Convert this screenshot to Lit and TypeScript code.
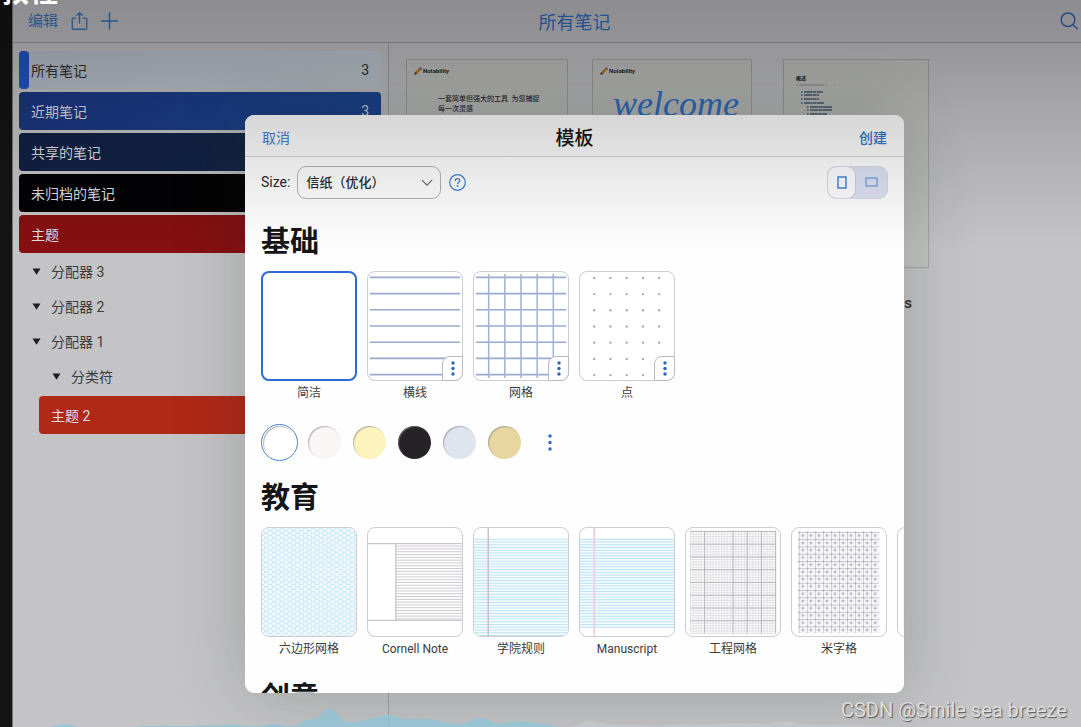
import { LitElement, html, css, svg, nothing } from "lit";
import { customElement, property, state } from "lit/decorators.js";
import { classMap } from "lit/directives/class-map.js";

const range = (n: number) => Array.from({ length: n }, (_, i) => i);

/* Paper artwork: every sheet is drawn on a 96 x 110 canvas. */
const hLines = (ys: number[], x1: number, x2: number, color: string, w = 1) =>
  ys.map((y) => svg`<line x1=${x1} x2=${x2} y1=${y} y2=${y} stroke=${color} stroke-width=${w}></line>`);
const vLines = (xs: number[], y1: number, y2: number, color: string, w = 1) =>
  xs.map((x) => svg`<line x1=${x} x2=${x} y1=${y1} y2=${y2} stroke=${color} stroke-width=${w}></line>`);

const ruleYs = range(7).map((i) => 5.5 + i * 16.5);

const papers: Record<string, () => unknown> = {
  plain: () => nothing,
  lines: () => hLines(ruleYs, 2, 94, "#9aaccb", 1.6),
  grid: () => [
    hLines(ruleYs, 2, 94, "#9aaccb", 1.6),
    vLines(range(5).map((i) => 15 + i * 16.5), 2, 108, "#a3b4d2", 1.6),
  ],
  dots: () =>
    ruleYs.map((y) => range(5).map((i) => svg`<circle cx=${14.5 + i * 16.6} cy=${y + 0.5} r="1.2" fill="#a6abbd"></circle>`)),
  hex: () => svg`
    <defs>
      <pattern id="hex" width="8" height="5" patternUnits="userSpaceOnUse">
        <path d="M0 2.5H1.5L3 0H5.5L7 2.5H8M1.5 2.5L3 5H5.5L7 2.5" fill="none" stroke="#b2e0f2" stroke-width="0.8"></path>
      </pattern>
    </defs>
    <rect width="96" height="110" fill="#f4fbff"></rect>
    <rect width="96" height="110" fill="url(#hex)"></rect>`,
  cornell: () => [
    hLines([16, 94], 0, 96, "#b9b6be"),
    vLines([28.5], 16, 94, "#b9b6be"),
    hLines(range(27).map((i) => 18.5 + i * 2.85), 28, 96, "#c5c1c9", 0.9),
  ],
  college: () => [
    svg`<rect y="11" width="96" height="99" fill="#f4fcff"></rect>`,
    hLines(range(36).map((i) => 11.5 + i * 2.8), 0, 96, "#b6e0ee", 0.9),
    vLines([14.5], 0, 110, "#c5aecb", 1.2),
  ],
  manuscript: () => [
    svg`<rect y="11" width="96" height="90" fill="#f4fcff"></rect>`,
    hLines(range(33).map((i) => 11.5 + i * 2.8), 0, 96, "#b2dff1", 0.9),
    vLines([14.5], 0, 110, "#f6cbe2", 1.8),
  ],
  engineer: () => [
    hLines(range(41).map((i) => 3.5 + i * 2.6), 4, 92, "#dad8dd", 0.8),
    vLines(range(31).map((i) => 4.5 + i * 2.9), 3, 107, "#dddbe0", 0.8),
    hLines(range(8).map((i) => 3.5 + i * 13), 4, 92, "#b4b2b8", 0.9),
    vLines([19, 48, 62.5, 77, 91.5], 3, 107, "#b4b2b8", 0.9),
  ],
  rice: () => svg`
    <defs>
      <pattern id="rice" x="7" y="4" width="8.2" height="7.4" patternUnits="userSpaceOnUse">
        <path d="M0 0H8.2M0 0V7.4" stroke="#b3b0ba" stroke-width="1.2"></path>
        <path d="M0 0L8.2 7.4M8.2 0L0 7.4M4.1 0V7.4M0 3.7H8.2" stroke="#cecbd4" stroke-width="0.5"></path>
        <circle cx="4.1" cy="3.7" r="1.1" fill="#aaa7b2"></circle>
        <circle cx="0" cy="0" r="1.4" fill="#a19ea9"></circle>
      </pattern>
    </defs>
    <rect x="6" y="3" width="83" height="104" fill="url(#rice)"></rect>`,
  staff: () => [
    hLines(range(26).map((i) => 6 + i * 3.9), 6, 90, "#c2bfc8", 1),
    vLines([6.5], 6, 104, "#c2bfc8"),
  ],
};

@customElement("paper-card")
class PaperCard extends LitElement {
  @property() kind = "plain";
  @property() label = "";
  @property({ type: Boolean }) selected = false;
  @property({ type: Boolean }) menu = false;

  static styles = css`
    :host { display: block; flex: none; width: 96px; }
    button { font: inherit; color: inherit; padding: 0; border: 0; background: none; display: block; }
    .wrap { position: relative; }
    .sheet {
      box-sizing: border-box; width: 96px; height: 110px; overflow: hidden;
      border: 1px solid #cdcbd4; border-radius: 8px; background: #fff;
    }
    .sheet svg { display: block; width: 100%; height: 100%; }
    .selected { border: 2px solid #2c6bd0; }
    .more {
      position: absolute; right: 0; bottom: 0; box-sizing: border-box; width: 21px; height: 25px;
      border: 1px solid #b9bac4; border-radius: 8px 0 8px 0; background: #fff;
      display: grid; place-items: center;
    }
    .label {
      display: block; text-align: center; white-space: nowrap;
      font-size: 12px; line-height: 24px; color: #3c3c40;
    }
  `;

  render() {
    return html`
      <div class="wrap">
        <button class=${classMap({ sheet: true, selected: this.selected })} aria-labelledby="label" aria-pressed=${this.selected}>
          <svg viewBox="0 0 96 110" preserveAspectRatio="none">${papers[this.kind]()}</svg>
        </button>
        ${this.menu
          ? html`<button class="more" aria-label="更多">
              <svg width="4" height="15" viewBox="0 0 4 15" fill="#2b66bd">
                <circle cx="2" cy="2" r="1.7"></circle><circle cx="2" cy="7.5" r="1.7"></circle><circle cx="2" cy="13" r="1.7"></circle>
              </svg>
            </button>`
          : nothing}
      </div>
      <span class="label" id="label">${this.label}</span>
    `;
  }
}

@customElement("template-dialog")
class TemplateDialog extends LitElement {
  @state() private landscape = false;
  @state() private paper = "plain";
  @state() private tint = 0;

  private basics = [
    { kind: "plain", label: "简洁", menu: false },
    { kind: "lines", label: "横线", menu: true },
    { kind: "grid", label: "网格", menu: true },
    { kind: "dots", label: "点", menu: true },
  ];
  private education = [
    { kind: "hex", label: "六边形网格" },
    { kind: "cornell", label: "Cornell Note" },
    { kind: "college", label: "学院规则" },
    { kind: "manuscript", label: "Manuscript" },
    { kind: "engineer", label: "工程网格" },
    { kind: "rice", label: "米字格" },
    { kind: "staff", label: "" },
  ];
  private tints = ["#ffffff", "#faf6f5", "#fcf3bd", "#252326", "#dee5ee", "#e7d6a0"];

  static styles = css`
    :host {
      display: flex; flex-direction: column; overflow: hidden; color: #151517;
      background: #fefefe; border-radius: 9px;
    }
    button { font: inherit; padding: 0; border: 0; background: none; }
    .bar {
      flex: none; display: grid; grid-template-columns: 1fr auto 1fr; align-items: center;
      height: 42px; padding: 5px 17px 0; box-sizing: border-box; border-bottom: 1px solid #d7d5dc;
      background: #fafafa;
    }
    .bar h2 { margin: 0; font-size: 19px; line-height: 32px; padding-top: 2px; font-weight: 500; }
    .link { color: #3a7fd6; font-size: 14px; line-height: 24px; }
    .strong { color: #2f74cc; font-weight: 500; justify-self: end; }
    .cancel { justify-self: start; }
    .tools { flex: none; display: flex; align-items: center; height: 50px; padding: 0 16px; }
    .tools label { font-size: 14px; margin-right: 7px; color: #2a2a2d; }
    .pick { position: relative; display: flex; margin-right: 8px; }
    select {
      appearance: none; box-sizing: border-box; width: 144px; height: 33px; padding: 0 30px 0 8px;
      font: inherit; font-size: 13px; font-weight: 500; color: #2a2a2d;
      border: 1px solid #b4b2b9; border-radius: 9px; background: transparent;
    }
    .chev { position: absolute; right: 8px; top: 13px; pointer-events: none; }
    .help { display: flex; }
    .seg {
      margin-left: auto; display: flex; box-sizing: border-box; width: 61px; height: 33px;
      border: 1px solid #d9d9e6; border-radius: 9px; background: #dde1f2; overflow: hidden;
    }
    .seg button { flex: 1; display: grid; place-items: center; border-radius: 8px; opacity: 0.6; }
    .seg .portrait { flex: 0 0 27px; }
    .seg .on { background: #fdfdff; opacity: 1; box-shadow: 0 0 0 1px #d3cfd6; }
    .body {
      flex: 1; min-height: 0; overflow: hidden; padding: 14px 0 0 16px;
      display: flex; flex-direction: column; gap: 16px;
    }
    section { flex: none; }
    h3 { margin: 0 0 8px; font-size: 29px; line-height: 42px; font-weight: 700; }
    .row { display: flex; gap: 10px; }
    .swatches { display: flex; align-items: center; gap: 8px; height: 37px; margin-top: 19px; }
    .slot { flex: none; width: 37px; height: 37px; border-radius: 50%; display: grid; place-items: center; box-sizing: border-box; }
    .slot.on { border: 1px solid #4a82d4; }
    .tint { width: 33px; height: 33px; border-radius: 50%; box-shadow: inset 1px 1px 1px #8a868c99; }
  `;

  private dots() {
    return html`<svg width="4" height="17" viewBox="0 0 4 17" fill="#2f68bd">
      <circle cx="2" cy="2" r="1.7"></circle><circle cx="2" cy="8.5" r="1.7"></circle><circle cx="2" cy="15" r="1.7"></circle>
    </svg>`;
  }

  render() {
    return html`
      <header class="bar">
        <button class="link cancel">取消</button>
        <h2>模板</h2>
        <button class="link strong">创建</button>
      </header>
      <div class="tools">
        <label for="size">Size:</label>
        <div class="pick">
          <select id="size"><option>信纸（优化）</option></select>
          <svg class="chev" width="12" height="8" viewBox="0 0 12 8" fill="none" stroke="#6a6a70" stroke-width="1.2">
            <path d="M1 1.2L6 6.2L11 1.2"></path>
          </svg>
        </div>
        <button class="help" aria-label="帮助">
          <svg width="17" height="17" viewBox="0 0 17 17" fill="none" stroke="#3d80d3" stroke-width="1.2">
            <circle cx="8.5" cy="8.5" r="7.8"></circle>
            <path d="M6.3 6.9C6.3 5.5 7.2 4.7 8.5 4.7S10.8 5.5 10.8 6.7C10.8 8.2 8.6 8.3 8.6 10"></path>
            <circle cx="8.6" cy="12" r="0.4"></circle>
          </svg>
        </button>
        <div class="seg">
          <button class=${classMap({ portrait: true, on: !this.landscape })} aria-label="纵向" @click=${() => (this.landscape = false)}>
            <svg width="10" height="13" viewBox="0 0 10 13" fill="none" stroke="#2f74cc" stroke-width="1.3">
              <rect x="1" y="1" width="8" height="11"></rect>
            </svg>
          </button>
          <button class=${classMap({ on: this.landscape })} aria-label="横向" @click=${() => (this.landscape = true)}>
            <svg width="13" height="10" viewBox="0 0 13 10" fill="none" stroke="#2f74cc" stroke-width="1.3">
              <rect x="1" y="1" width="11" height="8"></rect>
            </svg>
          </button>
        </div>
      </div>
      <div class="body">
        <section>
          <h3>基础</h3>
          <div class="row">
            ${this.basics.map((p) => html`<paper-card
              .kind=${p.kind} .label=${p.label} .menu=${p.menu} .selected=${this.paper === p.kind}
              @click=${() => (this.paper = p.kind)}></paper-card>`)}
          </div>
          <div class="swatches">
            ${this.tints.map((c, i) => html`<button class=${classMap({ slot: true, on: this.tint === i })}
              aria-label="纸张颜色" @click=${() => (this.tint = i)}>
              <span class="tint" style="background:${c}"></span>
            </button>`)}
            <button class="slot" aria-label="更多颜色">${this.dots()}</button>
          </div>
        </section>
        <section>
          <h3>教育</h3>
          <div class="row">
            ${this.education.map((p) => html`<paper-card
              .kind=${p.kind} .label=${p.label} .selected=${this.paper === p.kind}
              @click=${() => (this.paper = p.kind)}></paper-card>`)}
          </div>
        </section>
        <section><h3>创意</h3></section>
      </div>
    `;
  }
}

@customElement("app-root")
class AppRoot extends LitElement {
  private folders = [
    { name: "所有笔记", count: "3", cls: "all" },
    { name: "近期笔记", count: "3", cls: "recent" },
    { name: "共享的笔记", count: "", cls: "shared" },
    { name: "未归档的笔记", count: "", cls: "loose" },
    { name: "主题", count: "", cls: "subject" },
  ];
  private dividers = [
    { name: "分配器 3", nested: false },
    { name: "分配器 2", nested: false },
    { name: "分配器 1", nested: false },
    { name: "分类符", nested: true },
  ];

  static styles = css`
    :host {
      display: block; position: relative; height: 100vh; overflow: hidden; background: #141412;
      font-family: Roboto, "Noto Sans CJK SC", sans-serif; color: #2b2c30;
    }
    button { font: inherit; padding: 0; border: 0; background: none; text-align: left; }
    .app {
      position: relative; box-sizing: border-box; height: 100%; margin: 0 -56px 0 12px;
      display: flex; flex-direction: column; background: #c4c4c6; border-left: 1px solid #777;
    }
    .top {
      flex: none; box-sizing: border-box; height: 43px; padding: 0 58px 0 15px; border-bottom: 1px solid #9b9b9f;
      display: grid; grid-template-columns: 1fr auto 1fr; align-items: center; background: #c1c1c6;
    }
    .top h1 { margin: 0 0 0 42px; padding-top: 3px; font-size: 18px; line-height: 28px; font-weight: 400; color: #2f6cc0; }
    .acts { display: flex; align-items: center; gap: 13px; font-size: 15px; line-height: 20px; color: #3a70ba; }
    .acts button { color: inherit; display: flex; }
    .find { justify-self: end; display: flex; }
    .cols { flex: 1; min-height: 0; display: flex; }
    .side {
      flex: none; box-sizing: border-box; width: 376px; padding: 8px 7px 0 6px; border-right: 1px solid #a2a2a6;
      display: flex; flex-direction: column; gap: 3px; font-size: 14px;
    }
    .folder {
      box-sizing: border-box; flex: none; height: 38px; padding: 0 12px; border-radius: 4px; color: #dcdde2;
      display: flex; align-items: center; justify-content: space-between;
    }
    .all { background: linear-gradient(90deg, #b8bfca, #c1cad3); color: #2f3136; padding-left: 0; }
    .all::before { content: ""; flex: none; width: 10px; height: 38px; margin-right: 2px; border-radius: 4px; background: #2257c4; }
    .all span:first-of-type { flex: 1; }
    .recent { background: linear-gradient(90deg, #1c3680, #1b4796); }
    .shared { background: linear-gradient(90deg, #102142, #14284a); }
    .loose { background: #030204; }
    .subject { background: #860f11; }
    .sub { background: #b02818; margin: -1px 0 0 20px; }
    .tree { margin: -2px 0 0; padding: 0; list-style: none; }
    .tree button { display: flex; align-items: center; gap: 10px; height: 35px; padding-left: 13px; color: #3a3b3e; line-height: 20px; }
    .tree .nested { padding-left: 33px; }
    .notes { display: flex; align-items: flex-start; padding: 16px 0 0 17px; gap: 24px; }
    .note { flex: none; }
    .page { box-sizing: border-box; height: 209px; border: 1px solid #a5a5a6; background: #c3c4c2; overflow: hidden; }
    .w1 { width: 162px; }
    .w2 { width: 160px; }
    .w3 { width: 146px; margin-left: 7px; }
    .brand { display: flex; align-items: center; gap: 1px; padding: 7px 0 0 7px; font-size: 6px; line-height: 8px; font-weight: 700; color: #222; }
    .lead { margin: 19px 0 0 31px; font-size: 7px; line-height: 10px; font-weight: 500; }
    .script { margin: 9px 0 0 20px; font: italic 36px/40px "Liberation Serif", serif; color: #2f72cc; }
    .outline { padding: 14px 0 0 12px; font-size: 5px; line-height: 8px; font-weight: 700; color: #1c1c1e; }
    .outline svg { display: block; }
    .caption { text-align: right; padding: 25px 17px 0 0; font-size: 15px; line-height: 20px; font-weight: 500; }
    .modal {
      position: absolute; inset: 115px 233px 34px 232px; border-radius: 9px;
      box-shadow: 0 0 70px rgba(30, 42, 30, 0.24);
    }
    .shade {
      position: absolute; inset: 0 0 auto 0; height: 250px; pointer-events: none;
      background: linear-gradient(rgba(0,0,0,.27), rgba(0,0,0,.24) 16%, rgba(0,0,0,.14) 46%, rgba(0,0,0,.08) 70%, rgba(0,0,0,0));
    }
    .wave { position: absolute; left: 0; bottom: 0; width: 100%; height: 20px; }
    .clip {
      position: absolute; left: 0; top: -24px; font-size: 29px; line-height: 32px; font-weight: 700; color: #fff; white-space: nowrap;
    }
    .mark {
      position: absolute; right: 14px; bottom: 5px; font-size: 20px; line-height: 24px; color: #dededf;
      text-shadow: 1px 1px 1px #55575a; white-space: nowrap;
    }
  `;

  private brand() {
    return html`<div class="brand">
      <svg width="8" height="8" viewBox="0 0 8 8"><path d="M0.3 7.7L1.2 5L5.5 0.8L7.4 2.6L3 6.9Z" fill="#b77a2c"></path><path d="M0.3 7.7L1.2 5L3 6.9ZM5.5 0.8L6.2 0.2L8 1.9L7.4 2.6Z" fill="#33302c"></path></svg>
      <span>Notability</span>
    </div>`;
  }

  render() {
    const rows = [[0, 46, 3], [5, 22, 10], [5, 18, 13], [5, 18, 17], [5, 23, 21], [11, 25, 25], [11, 25, 28], [11, 20, 32]];
    return html`
      <div class="app">
        <header class="top">
          <div class="acts">
            <button>编辑</button>
            <button aria-label="分享">
              <svg width="17" height="20" viewBox="0 0 18 20" fill="none" stroke="currentColor" stroke-width="1.4">
                <path d="M5.5 7H2.6Q1.3 7 1.3 8.3V17.4Q1.3 18.7 2.6 18.7H15.4Q16.7 18.7 16.7 17.4V8.3Q16.7 7 15.4 7H12.5M9 13V1.2M5.8 4.3L9 1.1L12.2 4.3"></path>
              </svg>
            </button>
            <button aria-label="新建">
              <svg width="17" height="18" viewBox="0 0 17 18" fill="none" stroke="currentColor" stroke-width="1.4"><path d="M8.5 0.5V17.5M0 9H17"></path></svg>
            </button>
          </div>
          <h1>所有笔记</h1>
          <button class="find" aria-label="搜索">
            <svg width="19" height="18" viewBox="0 0 19 18" fill="none" stroke="#3566ac" stroke-width="1.5">
              <circle cx="8" cy="7.7" r="6.8"></circle><path d="M12.8 12.5L17.8 17.2"></path>
            </svg>
          </button>
        </header>
        <div class="cols">
          <nav class="side">
            ${this.folders.map((f) => html`<button class="folder ${f.cls}"><span>${f.name}</span><span>${f.count}</span></button>`)}
            <ul class="tree">
              ${this.dividers.map((d) => html`<li><button class=${classMap({ nested: d.nested })}>
                <svg width="9" height="7" viewBox="0 0 9 7" fill="#1d1e20"><path d="M0.5 0.5H8.5L4.5 6.8Z"></path></svg>
                <span>${d.name}</span>
              </button></li>`)}
            </ul>
            <button class="folder sub">主题 2</button>
          </nav>
          <main class="notes">
            <article class="note w1">
              <div class="page">${this.brand()}<p class="lead">一套简单但强大的工具&ensp;为您捕捉<br />每一次灵感</p></div>
            </article>
            <article class="note w2">
              <div class="page">${this.brand()}<p class="script">welcome</p></div>
            </article>
            <article class="note w3">
              <div class="page outline">
                概述
                <svg width="60" height="36" viewBox="0 0 60 36">
                  ${rows.map(([x, w, y]) => svg`<line x1=${x} x2=${x + w} y1=${y} y2=${y} stroke=${x ? "#4a5c74" : "#8a8b8d"} stroke-width=${x ? 1.5 : 1} stroke-dasharray="1.5 1.5 8 0.4 4 0.4 12"></line>`)}
                </svg>
              </div>
              <div class="caption">s</div>
            </article>
          </main>
        </div>
        <template-dialog class="modal" role="dialog" aria-label="模板"></template-dialog>
      </div>
      <svg class="wave" viewBox="0 0 1081 20" preserveAspectRatio="none">
        <path fill="#8ec4d8" fill-opacity="0.75" d="M50 20Q65 14 78 20L130 20Q150 18 188 19L215 18Q235 17 248 19L262 19Q273 15 286 19L296 19Q305 12 314 12C321 11 322 2 329 2S339 12 346 15Q360 15 368 12C380 11 382 7 390 8S400 12 408 12Q425 11 435 13Q448 16 460 17C470 16 473 10 481 11S492 16 500 17Q520 12 540 16L560 20Z"></path>
        <path fill="#c3cbcf" fill-opacity="0.7" d="M570 20C582 18 584 13 593 14S606 18 616 18Q640 18 660 19Q680 16 695 18L715 17Q735 15 765 17Q780 13 792 15Q810 19 835 18L890 19L900 20Z"></path>
      </svg>
      <div class="shade"></div>
      <div class="clip">教程</div>
      <div class="mark">CSDN @Smile sea breeze</div>
    `;
  }
}
